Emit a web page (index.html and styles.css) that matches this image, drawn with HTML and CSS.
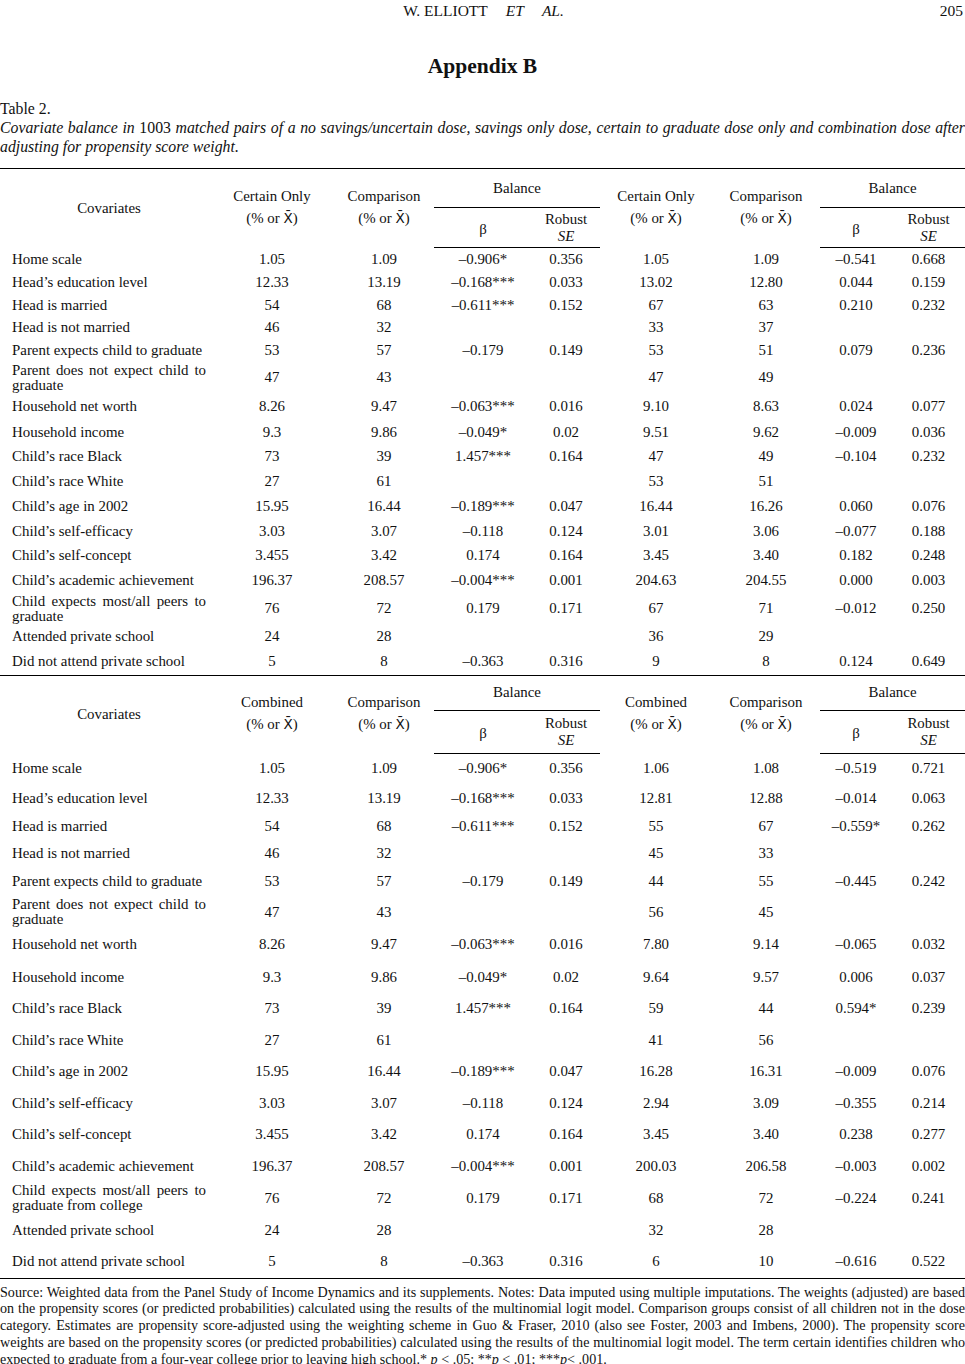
FILE: index.html
```html
<!DOCTYPE html>
<html lang="en">
<head>
<meta charset="utf-8">
<title>Appendix B</title>
<link rel="stylesheet" href="styles.css">
</head>
<body>
<div class="page">
  <header class="running-head">
    <span></span>
    <span class="authors">W. ELLIOTT<i class="gap">ET</i><i class="gap">AL.</i></span>
    <span class="folio">205</span>
  </header>

  <h1 class="title">Appendix B</h1>

  <p class="table-label">Table 2.</p>
  <p class="caption">Covariate balance in <span class="upright">1003</span> matched pairs of a no savings/uncertain dose, savings only dose, certain to graduate dose only and combination dose after adjusting for propensity score weight.</p>

  <table class="data first">
    <colgroup>
      <col class="c-cov"><col class="c-a"><col class="c-b"><col class="c-beta"><col class="c-se"><col class="c-c"><col class="c-d"><col class="c-beta2"><col class="c-se2">
    </colgroup>
    <thead>
      <tr class="hA1">
        <th rowspan="2" class="cov-head">Covariates</th>
        <th rowspan="2" class="grp">Certain Only<br>(% or <span class="xbar">X̄</span>)</th>
        <th rowspan="2" class="grp">Comparison<br>(% or <span class="xbar">X̄</span>)</th>
        <th colspan="2" class="bal">Balance</th>
        <th rowspan="2" class="grp">Certain Only<br>(% or <span class="xbar">X̄</span>)</th>
        <th rowspan="2" class="grp">Comparison<br>(% or <span class="xbar">X̄</span>)</th>
        <th colspan="2" class="bal bal2">Balance</th>
      </tr>
      <tr class="hB1">
        <th class="beta">β</th>
        <th class="rse">Robust<br><i>SE</i></th>
        <th class="beta">β</th>
        <th class="rse">Robust<br><i>SE</i></th>
      </tr>
    </thead>
    <tbody>
      <tr class="h24"><td>Home scale</td><td>1.05</td><td>1.09</td><td>–0.906*</td><td>0.356</td><td>1.05</td><td>1.09</td><td>–0.541</td><td>0.668</td></tr>
      <tr class="h22"><td>Head’s education level</td><td>12.33</td><td>13.19</td><td>–0.168***</td><td>0.033</td><td>13.02</td><td>12.80</td><td>0.044</td><td>0.159</td></tr>
      <tr class="h23"><td>Head is married</td><td>54</td><td>68</td><td>–0.611***</td><td>0.152</td><td>67</td><td>63</td><td>0.210</td><td>0.232</td></tr>
      <tr class="h22"><td>Head is not married</td><td>46</td><td>32</td><td></td><td></td><td>33</td><td>37</td><td></td><td></td></tr>
      <tr class="h24"><td>Parent expects child to graduate</td><td>53</td><td>57</td><td>–0.179</td><td>0.149</td><td>53</td><td>51</td><td>0.079</td><td>0.236</td></tr>
      <tr class="h29"><td>Parent does not expect child to graduate</td><td>47</td><td>43</td><td></td><td></td><td>47</td><td>49</td><td></td><td></td></tr>
      <tr class="h28"><td>Household net worth</td><td>8.26</td><td>9.47</td><td>–0.063***</td><td>0.016</td><td>9.10</td><td>8.63</td><td>0.024</td><td>0.077</td></tr>
      <tr class="h24"><td>Household income</td><td>9.3</td><td>9.86</td><td>–0.049*</td><td>0.02</td><td>9.51</td><td>9.62</td><td>–0.009</td><td>0.036</td></tr>
      <tr class="h24"><td>Child’s race Black</td><td>73</td><td>39</td><td>1.457***</td><td>0.164</td><td>47</td><td>49</td><td>–0.104</td><td>0.232</td></tr>
      <tr class="h25"><td>Child’s race White</td><td>27</td><td>61</td><td></td><td></td><td>53</td><td>51</td><td></td><td></td></tr>
      <tr class="h25"><td>Child’s age in 2002</td><td>15.95</td><td>16.44</td><td>–0.189***</td><td>0.047</td><td>16.44</td><td>16.26</td><td>0.060</td><td>0.076</td></tr>
      <tr class="h25"><td>Child’s self-efficacy</td><td>3.03</td><td>3.07</td><td>–0.118</td><td>0.124</td><td>3.01</td><td>3.06</td><td>–0.077</td><td>0.188</td></tr>
      <tr class="h24"><td>Child’s self-concept</td><td>3.455</td><td>3.42</td><td>0.174</td><td>0.164</td><td>3.45</td><td>3.40</td><td>0.182</td><td>0.248</td></tr>
      <tr class="h26"><td>Child’s academic achievement</td><td>196.37</td><td>208.57</td><td>–0.004***</td><td>0.001</td><td>204.63</td><td>204.55</td><td>0.000</td><td>0.003</td></tr>
      <tr class="h28"><td>Child expects most/all peers to graduate</td><td>76</td><td>72</td><td>0.179</td><td>0.171</td><td>67</td><td>71</td><td>–0.012</td><td>0.250</td></tr>
      <tr class="h25"><td>Attended private school</td><td>24</td><td>28</td><td></td><td></td><td>36</td><td>29</td><td></td><td></td></tr>
      <tr class="h27"><td>Did not attend private school</td><td>5</td><td>8</td><td>–0.363</td><td>0.316</td><td>9</td><td>8</td><td>0.124</td><td>0.649</td></tr>
    </tbody>
  </table>

  <table class="data second">
    <colgroup>
      <col class="c-cov"><col class="c-a"><col class="c-b"><col class="c-beta"><col class="c-se"><col class="c-c"><col class="c-d"><col class="c-beta2"><col class="c-se2">
    </colgroup>
    <thead>
      <tr class="hA2">
        <th rowspan="2" class="cov-head">Covariates</th>
        <th rowspan="2" class="grp">Combined<br>(% or <span class="xbar">X̄</span>)</th>
        <th rowspan="2" class="grp">Comparison<br>(% or <span class="xbar">X̄</span>)</th>
        <th colspan="2" class="bal">Balance</th>
        <th rowspan="2" class="grp">Combined<br>(% or <span class="xbar">X̄</span>)</th>
        <th rowspan="2" class="grp">Comparison<br>(% or <span class="xbar">X̄</span>)</th>
        <th colspan="2" class="bal bal2">Balance</th>
      </tr>
      <tr class="hB2">
        <th class="beta">β</th>
        <th class="rse">Robust<br><i>SE</i></th>
        <th class="beta">β</th>
        <th class="rse">Robust<br><i>SE</i></th>
      </tr>
    </thead>
    <tbody>
      <tr class="h31"><td>Home scale</td><td>1.05</td><td>1.09</td><td>–0.906*</td><td>0.356</td><td>1.06</td><td>1.08</td><td>–0.519</td><td>0.721</td></tr>
      <tr class="h28"><td>Head’s education level</td><td>12.33</td><td>13.19</td><td>–0.168***</td><td>0.033</td><td>12.81</td><td>12.88</td><td>–0.014</td><td>0.063</td></tr>
      <tr class="h28"><td>Head is married</td><td>54</td><td>68</td><td>–0.611***</td><td>0.152</td><td>55</td><td>67</td><td>–0.559*</td><td>0.262</td></tr>
      <tr class="h27"><td>Head is not married</td><td>46</td><td>32</td><td></td><td></td><td>45</td><td>33</td><td></td><td></td></tr>
      <tr class="h29"><td>Parent expects child to graduate</td><td>53</td><td>57</td><td>–0.179</td><td>0.149</td><td>44</td><td>55</td><td>–0.445</td><td>0.242</td></tr>
      <tr class="h32"><td>Parent does not expect child to graduate</td><td>47</td><td>43</td><td></td><td></td><td>56</td><td>45</td><td></td><td></td></tr>
      <tr class="h33"><td>Household net worth</td><td>8.26</td><td>9.47</td><td>–0.063***</td><td>0.016</td><td>7.80</td><td>9.14</td><td>–0.065</td><td>0.032</td></tr>
      <tr class="h32"><td>Household income</td><td>9.3</td><td>9.86</td><td>–0.049*</td><td>0.02</td><td>9.64</td><td>9.57</td><td>0.006</td><td>0.037</td></tr>
      <tr class="h31"><td>Child’s race Black</td><td>73</td><td>39</td><td>1.457***</td><td>0.164</td><td>59</td><td>44</td><td>0.594*</td><td>0.239</td></tr>
      <tr class="h32"><td>Child’s race White</td><td>27</td><td>61</td><td></td><td></td><td>41</td><td>56</td><td></td><td></td></tr>
      <tr class="h31"><td>Child’s age in 2002</td><td>15.95</td><td>16.44</td><td>–0.189***</td><td>0.047</td><td>16.28</td><td>16.31</td><td>–0.009</td><td>0.076</td></tr>
      <tr class="h32"><td>Child’s self-efficacy</td><td>3.03</td><td>3.07</td><td>–0.118</td><td>0.124</td><td>2.94</td><td>3.09</td><td>–0.355</td><td>0.214</td></tr>
      <tr class="h31"><td>Child’s self-concept</td><td>3.455</td><td>3.42</td><td>0.174</td><td>0.164</td><td>3.45</td><td>3.40</td><td>0.238</td><td>0.277</td></tr>
      <tr class="h32"><td>Child’s academic achievement</td><td>196.37</td><td>208.57</td><td>–0.004***</td><td>0.001</td><td>200.03</td><td>206.58</td><td>–0.003</td><td>0.002</td></tr>
      <tr class="h32"><td>Child expects most/all peers to graduate from college</td><td>76</td><td>72</td><td>0.179</td><td>0.171</td><td>68</td><td>72</td><td>–0.224</td><td>0.241</td></tr>
      <tr class="h32"><td>Attended private school</td><td>24</td><td>28</td><td></td><td></td><td>32</td><td>28</td><td></td><td></td></tr>
      <tr class="h32"><td>Did not attend private school</td><td>5</td><td>8</td><td>–0.363</td><td>0.316</td><td>6</td><td>10</td><td>–0.616</td><td>0.522</td></tr>
    </tbody>
  </table>

  <p class="notes">Source: Weighted data from the Panel Study of Income Dynamics and its supplements. Notes: Data imputed using multiple imputations. The weights (adjusted) are based on the propensity scores (or predicted probabilities) calculated using the results of the multinomial logit model. Comparison groups consist of all children not in the dose category. Estimates are propensity score-adjusted using the weighting scheme in Guo &amp; Fraser, 2010 (also see Foster, 2003 and Imbens, 2000). The propensity score weights are based on the propensity scores (or predicted probabilities) calculated using the results of the multinomial logit model. The term certain identifies children who expected to graduate from a four-year college prior to leaving high school.* <i>p</i> &lt; .05; **<i>p</i> &lt; .01; ***<i>p</i>&lt; .001.</p>
</div>
</body>
</html>
```

FILE: styles.css
```css
* { box-sizing: border-box; }

html, body {
  margin: 0;
  padding: 0;
  background: #ffffff;
}

body {
  font-family: "Liberation Serif", "Times New Roman", serif;
  color: #111111;
}

.page {
  width: 965px;
}

/* running head */
.running-head {
  display: grid;
  grid-template-columns: 1fr auto 1fr;
  height: 22px;
  line-height: 22px;
  font-size: 15.5px;
}
.authors { text-align: center; padding-left: 2px; }
.gap { margin-left: 18px; }
.folio { text-align: right; padding-right: 2px; }

.title {
  margin: 31px 0 0;
  text-align: center;
  font-size: 21.5px;
  line-height: 26px;
  font-weight: bold;
}

.table-label {
  margin: 20px 0 0;
  font-size: 15.8px;
  line-height: 19px;
}

.caption {
  margin: 0;
  font-size: 15.8px;
  line-height: 19px;
  font-style: italic;
  text-align: justify;
}
.upright { font-style: normal; }

/* tables */
.data {
  width: 965px;
  table-layout: fixed;
  border-collapse: collapse;
  font-size: 14.9px;
  line-height: 15px;
}
.data.first {
  margin-top: 12px;
  border-top: 1.5px solid #000;
  border-bottom: 1.5px solid #000;
}
.data.second {
  border-bottom: 1.5px solid #000;
}

.c-cov { width: 210px; }
.c-a { width: 124px; }
.c-b { width: 100px; }
.c-beta { width: 98px; }
.c-se { width: 68px; }
.c-c { width: 112px; }
.c-d { width: 108px; }
.c-beta2 { width: 72px; }
.c-se2 { width: 73px; }

.data th {
  font-weight: normal;
  text-align: center;
  vertical-align: middle;
  padding: 0;
}
.data thead tr:last-child th { border-bottom: 1.5px solid #000; }

.data th.cov-head { padding-left: 12px; padding-right: 4px; }
.data th.grp { line-height: 22px; padding-bottom: 3px; }
.data th.bal { border-bottom: 1.5px solid #000; }
.data th.rse { line-height: 17px; }
.data th.beta { padding-top: 4px; }

.hA1 { height: 39px; }
.hB1 { height: 40px; }
.hA2 { height: 34px; }
.hB2 { height: 43px; }

.xbar {
  font-family: "DejaVu Sans", sans-serif;
  font-size: 13.5px;
}

.data td {
  padding: 0;
  text-align: center;
  vertical-align: middle;
}
.data td:first-child {
  text-align: justify;
  padding-left: 12px;
  padding-right: 4px;
}

.h22 { height: 22px; }
.h23 { height: 23px; }
.h24 { height: 24px; }
.h25 { height: 25px; }
.h26 { height: 26px; }
.h27 { height: 27px; }
.h28 { height: 28px; }
.h29 { height: 29px; }
.h31 { height: 31px; }
.h32 { height: 32px; }
.h33 { height: 33px; }

.notes {
  margin: 5px 0 0;
  font-size: 14.1px;
  line-height: 16.8px;
  text-align: justify;
}
```
